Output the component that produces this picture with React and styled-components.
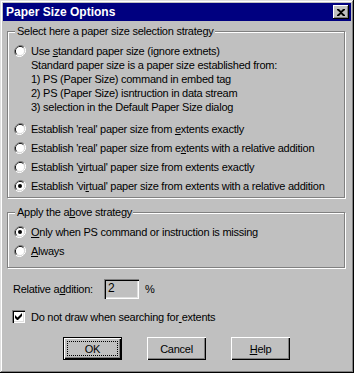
import React from "react";
import styled, { createGlobalStyle } from "styled-components";

const Global = createGlobalStyle`
  body {
    margin: 0;
    background: #c0c0c0;
    font-family: "Liberation Sans", Arial, sans-serif;
    font-size: 11px;
    letter-spacing: -0.25px;
    color: #000;
  }
`;

const Window = styled.div`
  box-sizing: border-box;
  width: 354px;
  height: 373px;
  background: #c0c0c0;
  padding: 3px;
  box-shadow: inset -1px -1px 0 #000, inset 1px 1px 0 #dfdfdf,
    inset -2px -2px 0 #808080, inset 2px 2px 0 #fff;
  display: flex;
  flex-direction: column;
`;

const TitleBar = styled.div`
  height: 18px;
  background: #000080;
  color: #fff;
  font-weight: bold;
  font-size: 12px;
  letter-spacing: 0;
  display: flex;
  align-items: center;
  justify-content: space-between;
  padding: 0 2px 0 3px;
`;

const CloseBtn = styled.div`
  box-sizing: border-box;
  width: 16px;
  height: 14px;
  background: #c0c0c0;
  box-shadow: inset -1px -1px 0 #000, inset 1px 1px 0 #fff,
    inset -2px -2px 0 #808080;
  display: flex;
  align-items: center;
  justify-content: center;
`;

const Body = styled.div`
  padding: 10px 6px 0 4px;
  display: flex;
  flex-direction: column;
`;

const Group = styled.div`
  position: relative;
  box-sizing: border-box;
  height: ${(p) => p.$h}px;
  border: 1px solid #808080;
  box-shadow: 1px 1px 0 #fff, inset 1px 1px 0 #fff;
  margin-bottom: ${(p) => p.$mb || 0}px;
  padding: ${(p) => p.$pt}px 0 0 6px;
  display: flex;
  flex-direction: column;
`;

const GroupLabel = styled.div`
  position: absolute;
  top: -8px;
  left: 7px;
  padding: 0 1px 0 2px;
  line-height: 14px;
  background: #c0c0c0;
`;

const Option = styled.div`
  display: flex;
  align-items: flex-start;
  gap: 5px;
  margin-bottom: ${(p) => p.$mb || 0}px;
`;

const OptText = styled.div`
  line-height: 14px;
`;

const Line = styled.div`
  line-height: 14px;
`;

const U = styled.span`
  text-decoration: underline;
`;

const RadioBox = styled.svg`
  flex: none;
  margin-top: 1px;
`;

function Radio({ checked }) {
  return (
    <RadioBox width="12" height="12" viewBox="0 0 12 12">
      <path d="M10.2 1.8 A6 6 0 0 0 1.8 10.2" fill="none" stroke="#808080" strokeWidth="1" />
      <path d="M1.8 10.2 A6 6 0 0 0 10.2 1.8" fill="none" stroke="#fff" strokeWidth="1" />
      <path d="M9.5 2.5 A5 5 0 0 0 2.5 9.5" fill="none" stroke="#000" strokeWidth="1" />
      <path d="M2.5 9.5 A5 5 0 0 0 9.5 2.5" fill="none" stroke="#dfdfdf" strokeWidth="1" />
      <circle cx="6" cy="6" r="4" fill="#fff" />
      {checked && <circle cx="6" cy="6" r="2" fill="#000" />}
    </RadioBox>
  );
}

const Row = styled.div`
  display: flex;
  align-items: center;
  gap: ${(p) => p.$gap || 0}px;
  margin-top: ${(p) => p.$mt || 0}px;
  padding-left: ${(p) => p.$pl || 0}px;
`;

const Field = styled.div`
  box-sizing: border-box;
  width: 35px;
  height: 20px;
  margin-left: 11px;
  padding: 2px 0 0 4px;
  font-size: 12px;
  line-height: 15px;
  background: #c0c0c0;
  box-shadow: inset 1px 1px 0 #808080, inset 2px 2px 0 #000,
    inset -1px -1px 0 #fff, inset -2px -2px 0 #dfdfdf;
`;

const Percent = styled.span`
  margin-left: 6px;
`;

const CheckBox = styled.div`
  box-sizing: border-box;
  width: 13px;
  height: 13px;
  background: #fff;
  box-shadow: inset 1px 1px 0 #808080, inset 2px 2px 0 #000,
    inset -1px -1px 0 #fff, inset -2px -2px 0 #dfdfdf;
  display: flex;
  align-items: center;
  justify-content: center;
`;

const Buttons = styled.div`
  display: flex;
  gap: 25px;
  margin-top: 14px;
  padding-left: 56px;
`;

const Button = styled.div`
  box-sizing: border-box;
  width: 59px;
  height: 23px;
  display: flex;
  align-items: center;
  justify-content: center;
  font-size: 11px;
  background: #c0c0c0;
  box-shadow: ${(p) =>
    p.$default
      ? "inset 0 0 0 1px #000, inset 2px 2px 0 #fff, inset -2px -2px 0 #000, inset -3px -3px 0 #808080"
      : "inset 1px 1px 0 #fff, inset -1px -1px 0 #000, inset -2px -2px 0 #808080"};
`;

const Focus = styled.span`
  box-sizing: border-box;
  width: 51px;
  height: 15px;
  border: 1px dotted #000;
  display: flex;
  align-items: center;
  justify-content: center;
`;

export default function App() {
  return (
    <>
      <Global />
      <Window>
        <TitleBar>
          <span>Paper Size Options</span>
          <CloseBtn>
            <svg width="8" height="7" viewBox="0 0 8 7">
              <path d="M0 0h2l2 2 2-2h2v1L5 3.5 8 6v1H6L4 5 2 7H0V6l3-2.5L0 1z" fill="#000" />
            </svg>
          </CloseBtn>
        </TitleBar>
        <Body>
          <Group $h={167} $mb={14} $pt={12}>
            <GroupLabel>Select here a paper size selection strategy</GroupLabel>
            <Option $mb={8}>
              <Radio />
              <OptText>
                <Line>
                  Use <U>s</U>tandard paper size (ignore extnets)
                </Line>
                <Line>Standard paper size is a paper size established from:</Line>
                <Line>1) PS (Paper Size) command in embed tag</Line>
                <Line>2) PS (Paper Size) isntruction in data stream</Line>
                <Line>3) selection in the Default Paper Size dialog</Line>
              </OptText>
            </Option>
            <Option $mb={5}>
              <Radio />
              <OptText>
                Establish 'real' paper size from <U>e</U>xtents exactly
              </OptText>
            </Option>
            <Option $mb={5}>
              <Radio />
              <OptText>
                Establish 'real' paper size from e<U>x</U>tents with a relative addition
              </OptText>
            </Option>
            <Option $mb={5}>
              <Radio />
              <OptText>
                Establish '<U>v</U>irtual' paper size from extents exactly
              </OptText>
            </Option>
            <Option>
              <Radio checked />
              <OptText>
                Establish 'vi<U>r</U>tual' paper size from extents with a relative addition
              </OptText>
            </Option>
          </Group>
          <Group $h={56} $pt={12}>
            <GroupLabel>
              Apply the a<U>b</U>ove strategy
            </GroupLabel>
            <Option $mb={5}>
              <Radio checked />
              <OptText>
                <U>O</U>nly when PS command or instruction is missing
              </OptText>
            </Option>
            <Option>
              <Radio />
              <OptText>
                <U>A</U>lways
              </OptText>
            </Option>
          </Group>
          <Row $mt={11} $pl={6}>
            <span>
              Relative a<U>d</U>dition:
            </span>
            <Field>2</Field>
            <Percent>%</Percent>
          </Row>
          <Row $mt={11} $pl={5} $gap={6}>
            <CheckBox>
              <svg width="7" height="7" viewBox="0 0 7 7">
                <path d="M0 2v3l2 2h1l4-4V0L2.5 4.5z" fill="#000" />
              </svg>
            </CheckBox>
            <span>
              Do not draw when searching for<U> </U>extents
            </span>
          </Row>
          <Buttons>
            <Button $default>
              <Focus>OK</Focus>
            </Button>
            <Button>Cancel</Button>
            <Button>
              <span>
                <U>H</U>elp
              </span>
            </Button>
          </Buttons>
        </Body>
      </Window>
    </>
  );
}
